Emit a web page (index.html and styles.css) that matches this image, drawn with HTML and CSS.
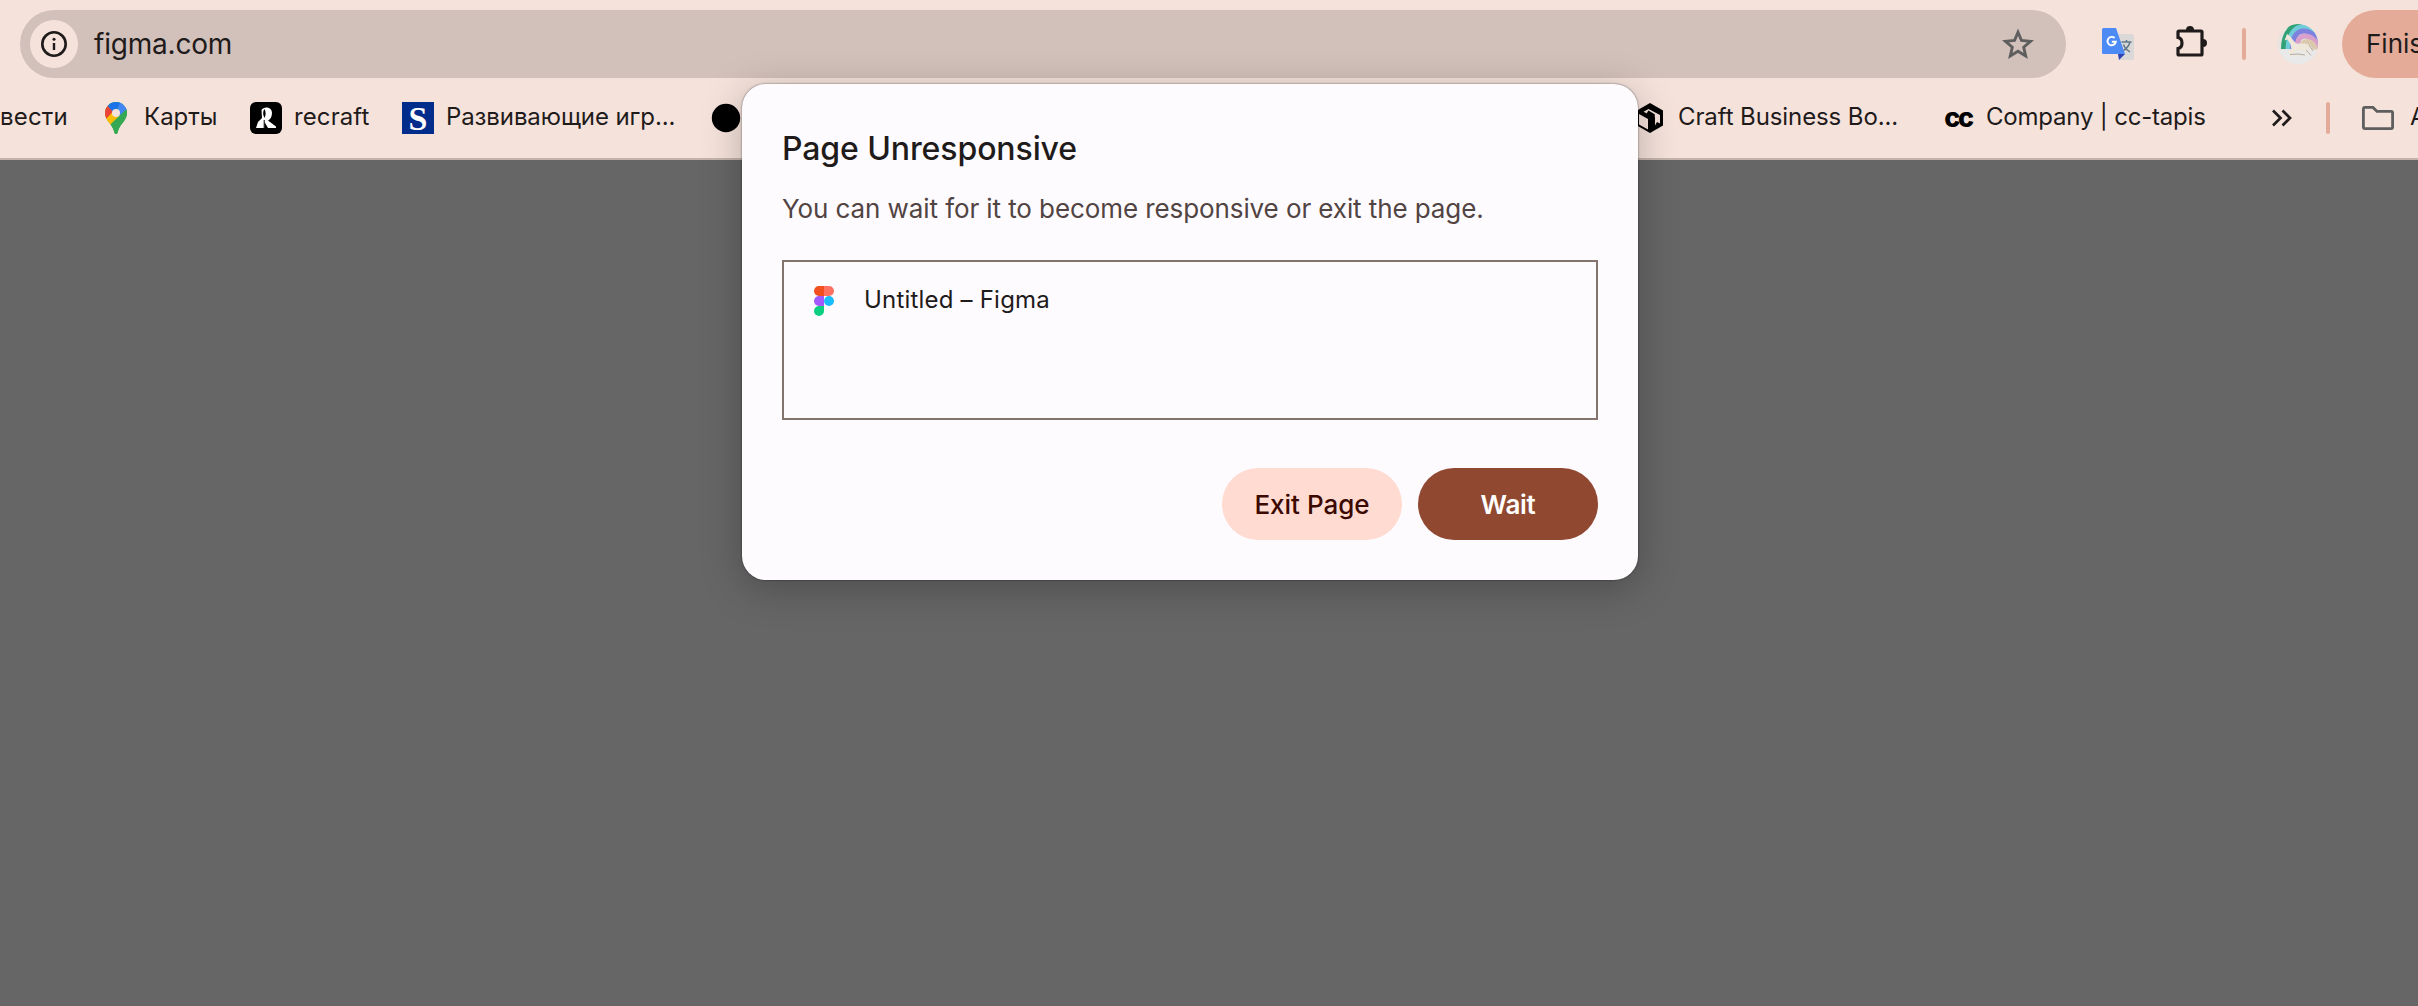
FILE: index.html
```html
<!DOCTYPE html>
<html lang="en">
<head>
    <meta charset="UTF-8">
    <meta name="viewport" content="width=device-width, initial-scale=1.0">
    <title>Untitled – Figma</title>
    <link rel="stylesheet" href="styles.css">
</head>
<body>
    <header class="browser">
        <!-- Address bar -->
        <div class="toolbar">
            <div class="omnibox">
                <span class="site-info">
                    <svg width="28" height="28" viewBox="0 0 28 28">
                        <circle cx="14" cy="14" r="11.7" fill="none" stroke="#1f1b1b" stroke-width="2.6"/>
                        <path d="M14 13v7" stroke="#1f1b1b" stroke-width="2.4"/>
                        <circle cx="14" cy="9.2" r="1.5" fill="#1f1b1b"/>
                    </svg>
                </span>
                <span class="url">figma.com</span>
                <svg class="star" width="32" height="32" viewBox="0 0 32 32">
                    <path d="M16 4.200l3.500 8.300 9 .8-6.800 5.900 2 8.800-7.700-4.700-7.700 4.700 2-8.800-6.800-5.900 9-.8z" fill="none" stroke="#5f5e5e" stroke-width="2.900"/>
                </svg>
            </div>

            <svg class="translate" width="32" height="32" viewBox="0 0 32 32">
                <path d="M13 6h17.500q1.500 0 1.500 1.500v23q0 1.500-1.500 1.500H17z" fill="#dbd9d8"/>
                <path d="M16 26h7l-6 6z" fill="#3043b5"/>
                <path d="M19.500 14h10M24.500 12v2M28 14c-1 4-4 7-7 9M21.500 16.500c1 3 3.500 5.500 6.500 7.500" fill="none" stroke="#607988" stroke-width="1.500"/>
                <path d="M1.500 0H14l9 26H1.500Q0 26 0 24.500v-23Q0 0 1.500 0z" fill="#4c8bf5"/>
                <path d="M12.600 10a4.200 4.200 0 1 0 1.300 3.700H9.800" fill="none" stroke="#fff" stroke-width="1.900"/>
            </svg>

            <svg class="puzzle" width="34" height="34" viewBox="0 0 34 34">
                <path d="M4 6h22q1 0 1 1v22q0 1-1 1H4q-1 0-1-1v-5.500c2.500-.5 4-2.500 4-5.500s-1.500-5-4-5.500V7q0-1 1-1z" fill="none" stroke="#1f1b1b" stroke-width="3.200"/>
                <path d="M11 5a4 4 0 0 1 8 0zM28 14a4 4 0 0 1 0 8z" fill="#1f1b1b"/>
            </svg>

            <span class="divider"></span>

            <svg class="avatar" width="40" height="40" viewBox="0 0 40 40">
                <defs>
                    <clipPath id="avatar-clip"><circle cx="20" cy="20" r="20"/></clipPath>
                </defs>
                <g clip-path="url(#avatar-clip)">
                    <path d="M0 0h40v40H0z" fill="#e6e3e0"/>
                    <g fill="none" stroke-width="5">
                        <path d="M5.500 25C5.500 10 12 2 23-1" stroke="#32a176"/>
                        <path d="M10 25C10 11 17 3 25 2.500q8 0 15 7" stroke="#70ccd8"/>
                        <path d="M14.500 25C14 12 20 7 26 7q9 .5 16 11" stroke="#7c82dd"/>
                        <path d="M19 25c0-10 4-13.500 8.500-13 6 .5 11 5 13 12" stroke="#d9a0ce"/>
                        <path d="M23.500 27c0-8 3-10 6-9.500 4 .5 7 3 8 9" stroke="#dbc9ad"/>
                    </g>
                    <path d="M0 25.500h40V40H0z" fill="#e9e9ea"/>
                    <path d="M9 10l3 2 3 4 3 3.500h9l5 2 2.500 7-4-4-2 1 4 5.500-7-4-7-.5-5 4-4-1 4-4-1-5-3-5-3 1z" fill="#eee7da"/>
                    <path d="M12 30.500l8-.5 7 1M28 26l5 5.500M31 21l4 6" fill="none" stroke="#b9aa9b" stroke-width="1"/>
                </g>
            </svg>

            <div class="update">Finis</div>
        </div>

        <!-- Bookmarks -->
        <nav class="bookmarks">
            <a class="bookmark first">вести</a>
            <a class="bookmark maps">
                <svg width="32" height="32" viewBox="0 0 32 32">
                    <defs>
                        <clipPath id="pin-clip"><path d="M16 0a11 11 0 0 1 11 11c0 8-8 11-9.500 20q-1.500 2-3 0C13 22 5 19 5 11A11 11 0 0 1 16 0z"/></clipPath>
                    </defs>
                    <g clip-path="url(#pin-clip)">
                        <path d="M0 0h32v32H0z" fill="#34a853"/>
                        <path d="M0 0h8l8 11-9 11-7-3z" fill="#fbbc04"/>
                        <path d="M16 11l4 2.500L9 24 4 18z" fill="#fbbc04"/>
                        <path d="M0 0l7.500 3.700 6 5.200L6 17 0 16z" fill="#ea4335"/>
                        <path d="M7.500 3.700L9 0h11l1 2-7.500 8.500z" fill="#1a73e8"/>
                        <path d="M20 .5L32 0v6l-5.500 2L19 14l-3-3z" fill="#4285f4"/>
                        <path d="M26.500 7l5.500 0v25H15l-6-8z" fill="#34a853"/>
                    </g>
                    <circle cx="16" cy="11" r="4" fill="#f5e2db"/>
                </svg>
                <span>Карты</span>
            </a>
            <a class="bookmark recraft">
                <svg width="32" height="32" viewBox="0 0 32 32">
                    <rect width="32" height="32" rx="6" fill="#000"/>
                    <path d="M11.500 8c2-4 10.500-3.500 10.500 3 0 4-2 6.500-4 7.500l8 6v1.500h-8l-3.500-6v6H6l2-6 4-4z" fill="#fff"/>
                    <path d="M14.500 7c-1.800 2-1.800 6 0 9 1.500-3 1.500-6 0-9z" fill="#000"/>
                    <path d="M14.200 18v8" stroke="#000" stroke-width="1"/>
                </svg>
                <span>recraft</span>
            </a>
            <a class="bookmark games">
                <span class="s-logo">S</span>
                <span>Развивающие игр...</span>
            </a>
            <a class="bookmark dot">
                <svg width="32" height="32" viewBox="0 0 32 32">
                    <circle cx="16" cy="16" r="14.200" fill="#000"/>
                </svg>
            </a>
            <a class="bookmark craft">
                <svg width="32" height="32" viewBox="0 0 32 32">
                    <path d="M16 1l13 7.500v15L16 31 3 23.500v-15z" fill="#000"/>
                    <path d="M5 12l9 5v10.500L5 22.500z" fill="#f5e2db"/>
                    <path d="M9.500 9.800l5-2.800L26 13v8.500l-3-1.500-2 3.500v-8z" fill="#f5e2db"/>
                    <path d="M13.500 10l5.500 3.200V27" fill="none" stroke="#000" stroke-width="3.500"/>
                </svg>
                <span>Craft Business Bo...</span>
            </a>
            <a class="bookmark tapis">
                <span class="cc-logo">cc</span>
                <span>Company | cc-tapis</span>
            </a>
            <svg class="more" width="24" height="20" viewBox="0 0 24 20">
                <path d="M3 2.500l7.500 7.500L3 17.500M12.500 2.500L20 10l-7.500 7.500" fill="none" stroke="#1f1b1b" stroke-width="2.700"/>
            </svg>
            <span class="divider"></span>
            <svg class="folder" width="32" height="24" viewBox="0 0 32 24">
                <path d="M3 1.400h8l4 4h14q1.600 0 1.600 1.600v14q0 1.600-1.600 1.600H3Q1.400 22.600 1.400 21V3Q1.400 1.400 3 1.400z" fill="none" stroke="#5f5e5e" stroke-width="2.800"/>
            </svg>
            <span class="all">A</span>
        </nav>
    </header>

    <!-- Unresponsive page dialog -->
    <div class="dialog">
        <h1>Page Unresponsive</h1>
        <p class="message">You can wait for it to become responsive or exit the page.</p>
        <div class="page-list">
            <svg width="20" height="30" viewBox="0 0 20 30">
                <path d="M5 0h5v10H5A5 5 0 0 1 5 0z" fill="#f24e1e"/>
                <path d="M10 0h5a5 5 0 0 1 0 10h-5z" fill="#ff7262"/>
                <path d="M5 10h5v10H5a5 5 0 0 1 0-10z" fill="#a259ff"/>
                <circle cx="15" cy="15" r="5" fill="#1abcfe"/>
                <path d="M5 20h5v5a5 5 0 1 1-5-5z" fill="#0acf83"/>
            </svg>
            <span>Untitled – Figma</span>
        </div>
        <div class="actions">
            <button type="button" class="button exit"><span>Exit Page</span></button>
            <button type="button" class="button wait"><span>Wait</span></button>
        </div>
    </div>
</body>
</html>
```
FILE: styles.css
```css
* {
    margin: 0;
    padding: 0;
    box-sizing: border-box;
}

body {
    height: 1006px;
    background-color: #666;
    color: #1f1b1b;
    font-family: Inter, 'Liberation Sans', sans-serif;
    overflow: hidden;
}

svg {
    display: block;
    flex-shrink: 0;
}

.browser {
    height: 160px;
    background: #f5e2db;
    border-bottom: 2px solid #c3b3ab;
}

.toolbar {
    display: flex;
    align-items: center;
    height: 78px;
    padding: 10px 0 0 20px;
}

.omnibox {
    display: flex;
    align-items: center;
    flex-shrink: 0;
    width: 2046px;
    height: 68px;
    padding: 0 32px 0 10px;
    background: #d2c0ba;
    border-radius: 34px;
}

.site-info {
    display: flex;
    align-items: center;
    justify-content: center;
    width: 48px;
    height: 48px;
    border-radius: 50%;
    background: #f5e2db;
}

.url {
    margin-left: 16px;
    font-size: 28px;
    letter-spacing: -0.2px;
}

.star {
    margin-left: auto;
}

.translate {
    margin-left: 36px;
}

.puzzle {
    margin: -4px 0 0 41px;
}

.divider {
    flex-shrink: 0;
    width: 4px;
    height: 32px;
    border-radius: 2px;
    background: #e5ab99;
}

.toolbar .divider {
    margin-left: 33px;
}

.avatar {
    margin-left: 32px;
}

.update {
    flex-shrink: 0;
    width: 76px;
    height: 68px;
    margin-left: 24px;
    padding-left: 24px;
    border-radius: 34px 0 0 34px;
    background: #e4ab99;
    font-size: 26px;
    line-height: 68px;
    white-space: nowrap;
    overflow: hidden;
}

.bookmarks {
    display: flex;
    align-items: center;
    height: 80px;
    font-size: 24px;
    line-height: 28px;
    white-space: nowrap;
}

.bookmark {
    display: flex;
    align-items: center;
    flex-shrink: 0;
    gap: 12px;
}

.bookmark span:last-child {
    padding-bottom: 2px;
}

.first {
    width: 100px;
    padding-bottom: 2px;
    letter-spacing: 0.2px;
}

.maps {
    width: 150px;
}

.recraft {
    width: 152px;
    letter-spacing: 0.1px;
}

.games {
    width: 308px;
    letter-spacing: -0.1px;
}

.dot {
    width: 924px;
}

.craft {
    width: 308px;
    letter-spacing: -0.1px;
}

.tapis {
    width: 328px;
    letter-spacing: -0.2px;
}

.s-logo {
    width: 32px;
    height: 32px;
    background: #002d8b;
    color: #fff;
    font: bold 34px/33px 'Liberation Serif', serif;
    text-align: center;
}

.cc-logo {
    width: 32px;
    font-size: 27px;
    font-weight: 800;
    line-height: 28px;
    letter-spacing: -2.4px;
    text-align: center;
    color: #000;
}

.bookmarks .divider {
    margin: 0 32px;
}

.all {
    margin-left: 16px;
    padding-bottom: 2px;
}

/* The dialog hangs over the toolbar and the page */
.dialog {
    position: absolute;
    top: 84px;
    left: 742px;
    width: 896px;
    height: 496px;
    padding: 40px;
    border-radius: 24px;
    background: #fefbff;
    box-shadow: 0 0 2px rgba(0, 0, 0, 0.6), 0 8px 40px rgba(0, 0, 0, 0.25);
}

h1 {
    font-size: 32px;
    font-weight: 500;
    line-height: 50px;
    letter-spacing: -0.1px;
}

.message {
    margin-top: 15px;
    color: #514442;
    font-size: 26px;
    line-height: 40px;
    letter-spacing: -0.09px;
}

.page-list {
    display: flex;
    align-items: flex-start;
    gap: 30px;
    height: 160px;
    margin-top: 31px;
    padding: 24px 30px;
    border: 2px solid #85736f;
    font-size: 24px;
    line-height: 28px;
    letter-spacing: 0.2px;
}

.actions {
    display: flex;
    justify-content: flex-end;
    gap: 16px;
    margin-top: 48px;
}

.button {
    width: 180px;
    height: 72px;
    border: none;
    border-radius: 36px;
    font: 500 26px Inter, 'Liberation Sans', sans-serif;
}

.exit {
    background: #ffdbd1;
    color: #3b0900;
}

.wait {
    background: #904930;
    color: #fff;
    font-weight: 600;
    letter-spacing: -0.3px;
}
```
